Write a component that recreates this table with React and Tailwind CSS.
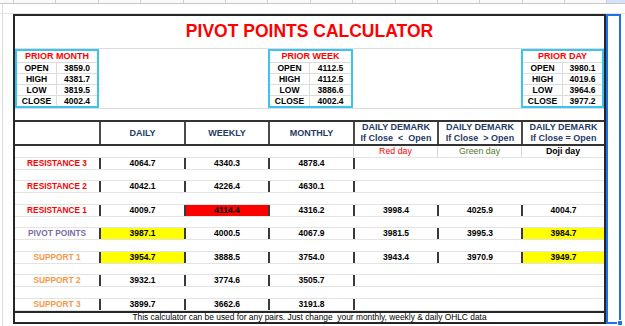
import React from "react";

const COLS = "grid grid-cols-[84px_85px_84px_85px_84px_84px_83px]";

function InfoBox({ title, rows, className }) {
  return (
    <div className={`border-2 border-[#3cc3f2] flex flex-col ${className}`}>
      <div className="h-[11px] flex items-center justify-center text-[9px] leading-none font-bold text-[#ff0000]">
        {title}
      </div>
      {rows.map(([k, v]) => (
        <div key={k} className="h-[11px] border-t border-[#dcdcdc] flex text-[8.5px] leading-none font-bold text-black">
          <div className="w-[40px] border-r border-[#dcdcdc] flex items-center justify-center">{k}</div>
          <div className="flex-1 flex items-center justify-center">{v}</div>
        </div>
      ))}
    </div>
  );
}

const Y = "bg-[#ffff00]";
const R = "bg-[#ff0000]";

const ROWS = [
  { k: "day", h: "h-[12px]" },
  { label: "RESISTANCE 3", c: "text-[#ff0000]", v: ["4064.7", "4340.3", "4878.4"], h: "h-[12px]" },
  { k: "blank", h: "h-[11px]" },
  { label: "RESISTANCE 2", c: "text-[#ff0000]", v: ["4042.1", "4226.4", "4630.1"], h: "h-[12px]" },
  { k: "blank", h: "h-[12px]" },
  { label: "RESISTANCE 1", c: "text-[#ff0000]", v: ["4009.7", "4114.4", "4316.2", "3998.4", "4025.9", "4004.7"], bg: { 2: R }, h: "h-[12px]" },
  { k: "blank", h: "h-[11px]" },
  { label: "PIVOT POINTS", c: "text-[#7a6aa8]", v: ["3987.1", "4000.5", "4067.9", "3981.5", "3995.3", "3984.7"], bg: { 1: Y, 6: Y }, h: "h-[12px]" },
  { k: "blank", h: "h-[12px]" },
  { label: "SUPPORT 1", c: "text-[#f79646]", v: ["3954.7", "3888.5", "3754.0", "3943.4", "3970.9", "3949.7"], bg: { 1: Y, 6: Y }, h: "h-[12px]" },
  { k: "blank", h: "h-[11px]" },
  { label: "SUPPORT 2", c: "text-[#f79646]", v: ["3932.1", "3774.6", "3505.7"], h: "h-[12px]" },
  { k: "blank", h: "h-[12px]" },
  { label: "SUPPORT 3", c: "text-[#f79646]", v: ["3899.7", "3662.6", "3191.8"], h: "h-[12px]" },
];

function BodyRow({ row }) {
  if (row.k === "blank") {
    return <div className={`${row.h} border-b border-[#e3e3e3]`} />;
  }
  if (row.k === "day") {
    return (
      <div className={`${row.h} border-b border-[#e3e3e3] ${COLS} text-[8.8px] leading-none`}>
        <div />
        <div />
        <div />
        <div />
        <div className="border-l border-[#d9d9d9] flex items-center justify-center text-[#ff0000]">Red day</div>
        <div className="border-l border-[#d9d9d9] flex items-center justify-center text-[#4f7a28]">Green day</div>
        <div className="border-l border-[#d9d9d9] flex items-center justify-center text-black font-bold">Doji day</div>
      </div>
    );
  }
  const n = row.v.length;
  const boxed = (i) => i >= 1 && i <= n;
  return (
    <div className={`${row.h} border-b border-[#e3e3e3] ${COLS} text-[8.5px] leading-none font-bold`}>
      <div className={`flex items-center justify-center text-[8.3px] ${row.c}`}>{row.label}</div>
      {[1, 2, 3, 4, 5, 6].map((i) => {
        const hasL = boxed(i) || boxed(i - 1);
        const bg = (row.bg && row.bg[i]) || "";
        return (
          <div
            key={i}
            className={`flex items-center justify-center text-black ${bg} ${hasL ? "border-l-2 border-l-[#3a3a3a]" : ""}`}
          >
            {row.v[i - 1] || ""}
          </div>
        );
      })}
    </div>
  );
}

export default function App() {
  const gridCells = Array.from({ length: 14 });
  return (
    <div className="w-[625px] h-[326px] overflow-hidden bg-white font-['Liberation_Sans',Arial,sans-serif] text-black">
      {/* spreadsheet column header stub */}
      <div className="h-[4px] flex bg-[#f8f9fa] border-b border-[#c7c7c7]">
        <div className="w-[14px] border-r border-[#d0d0d0]" />
        {gridCells.map((_, i) => (
          <div key={i} className="w-[42.4px] border-r border-[#d0d0d0]" />
        ))}
        <div className="flex-1 bg-[#d3e3fd]" />
      </div>
      <div className="h-[10px] flex border-b border-[#e3e3e3]">
        <div className="w-[3px] border-r border-[#dadce0]" />
      </div>

      <div className="flex h-[312px]">
        {/* left gutter */}
        <div className="w-[13px] flex">
          <div className="w-[3px] border-r border-[#dadce0]" />
        </div>

        {/* table */}
        <div className="w-[593px] h-[310px] border-2 border-[#262626] flex flex-col">
          <div className="h-[33px] border-b border-[#dcdcdc] flex items-center justify-center text-[17.5px] leading-none font-bold text-[#ff0000]">
            PIVOT POINTS CALCULATOR
          </div>

          <div className={`h-[60px] border-b border-[#dcdcdc] ${COLS}`}>
            <InfoBox
              className="col-start-1"
              title="PRIOR MONTH"
              rows={[["OPEN", "3859.0"], ["HIGH", "4381.7"], ["LOW", "3819.5"], ["CLOSE", "4002.4"]]}
            />
            <InfoBox
              className="col-start-4"
              title="PRIOR WEEK"
              rows={[["OPEN", "4112.5"], ["HIGH", "4112.5"], ["LOW", "3886.6"], ["CLOSE", "4002.4"]]}
            />
            <InfoBox
              className="col-start-7"
              title="PRIOR DAY"
              rows={[["OPEN", "3980.1"], ["HIGH", "4019.6"], ["LOW", "3964.6"], ["CLOSE", "3977.2"]]}
            />
          </div>

          <div className="h-[11px]" />

          {/* header */}
          <div className={`h-[26px] border-y-2 border-[#333333] ${COLS} text-[9px] leading-[11px] font-bold text-[#1f3a68]`}>
            <div />
            <div className="border-l-2 border-[#4a4a4a] flex items-center justify-center">DAILY</div>
            <div className="border-l-2 border-[#4a4a4a] flex items-center justify-center">WEEKLY</div>
            <div className="border-l-2 border-[#4a4a4a] flex items-center justify-center">MONTHLY</div>
            <div className="border-l-2 border-[#4a4a4a] flex flex-col items-center justify-center whitespace-pre">
              <span>DAILY DEMARK</span>
              <span>If Close  &lt;  Open</span>
            </div>
            <div className="border-l-2 border-[#4a4a4a] flex flex-col items-center justify-center whitespace-pre">
              <span>DAILY DEMARK</span>
              <span>If Close  &gt; Open</span>
            </div>
            <div className="border-l-2 border-[#4a4a4a] flex flex-col items-center justify-center whitespace-pre">
              <span>DAILY DEMARK</span>
              <span>If Close = Open</span>
            </div>
          </div>

          {ROWS.map((r, i) => (
            <BodyRow key={i} row={r} />
          ))}

          <div className="flex-1 border-t-2 border-[#262626] flex items-center justify-center text-[8.4px] leading-none whitespace-pre">
            This calculator can be used for any pairs. Just change  your monthly, weekly &amp; daily OHLC data
          </div>
        </div>

        {/* selected column */}
        <div className="w-[19px] flex">
          <div className="relative w-[15px] h-[310px] border-2 border-[#1a73e8]">
            <div className="absolute -right-[4px] -bottom-[4px] w-[6px] h-[6px] bg-[#1a73e8] border border-white" />
          </div>
        </div>
      </div>
    </div>
  );
}
